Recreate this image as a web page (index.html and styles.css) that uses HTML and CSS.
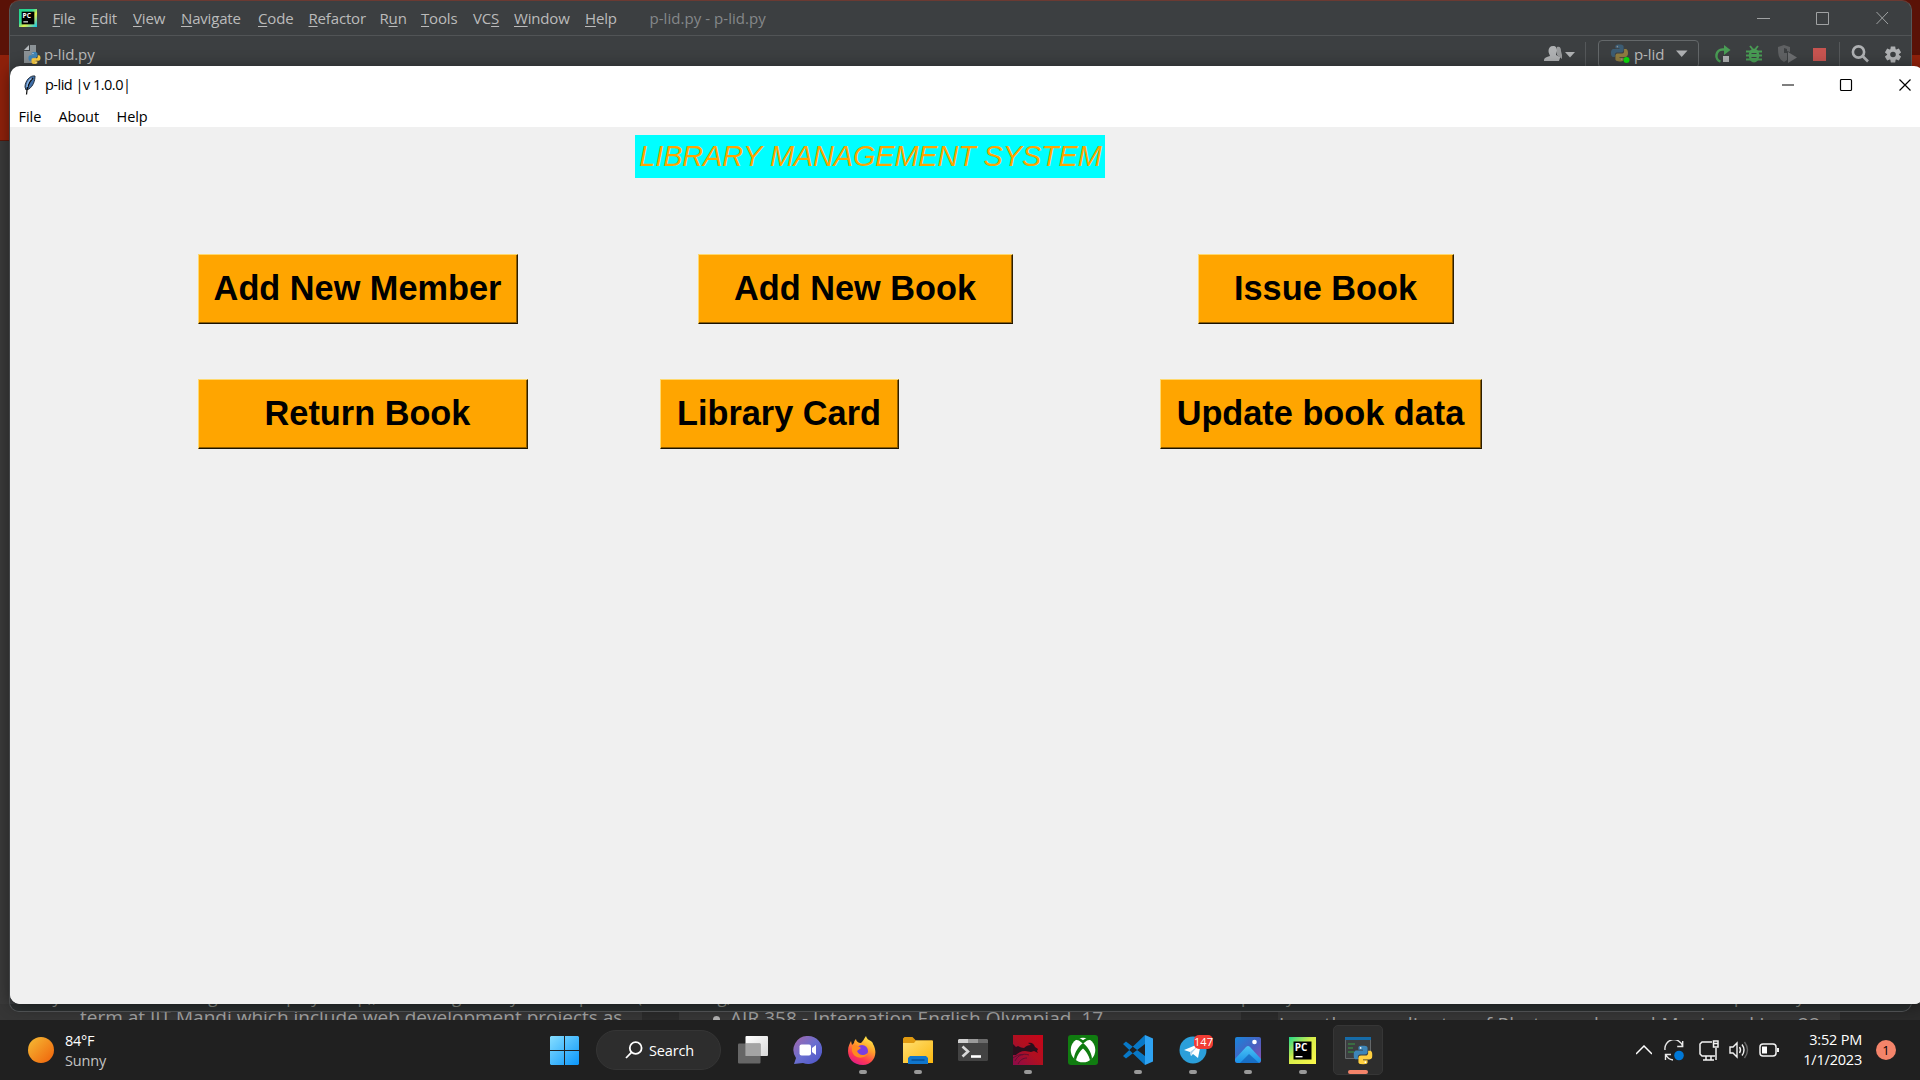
FILE: index.html
```html
<!DOCTYPE html>
<html lang="en">
<head>
<meta charset="utf-8">
<title>p-lid |v 1.0.0|</title>
<link rel="stylesheet" href="styles.css">
</head>
<body>
<svg width="0" height="0" class="defs">
  <defs>
    <linearGradient id="gWin" x1="0" y1="0" x2="1" y2="1"><stop offset="0" stop-color="#86deff"/><stop offset="1" stop-color="#0a96fa"/></linearGradient>
    <linearGradient id="gPc" x1="0" y1="0" x2="1" y2="1"><stop offset="0" stop-color="#21d789"/><stop offset=".45" stop-color="#d8ee4a"/><stop offset="1" stop-color="#fcf84a"/></linearGradient>
    <linearGradient id="gPcIde" x1="0" y1="0" x2="1" y2="1"><stop offset="0" stop-color="#21d789"/><stop offset=".4" stop-color="#2fd89a"/><stop offset=".6" stop-color="#e8f04a"/><stop offset="1" stop-color="#07c3f2"/></linearGradient>
    <linearGradient id="gChat" x1="0" y1="0" x2="1" y2="1"><stop offset="0" stop-color="#a566a8"/><stop offset=".5" stop-color="#6a6fd0"/><stop offset="1" stop-color="#4a52c8"/></linearGradient>
    <linearGradient id="gFox" x1=".8" y1="0" x2=".3" y2="1"><stop offset="0" stop-color="#fff44f"/><stop offset=".4" stop-color="#ffa02a"/><stop offset=".75" stop-color="#ff3a50"/><stop offset="1" stop-color="#e01a8c"/></linearGradient>
    <linearGradient id="gDir" x1="0" y1="0" x2="1" y2="1"><stop offset="0" stop-color="#ffdf72"/><stop offset="1" stop-color="#fcb80f"/></linearGradient>
    <linearGradient id="gKali" x1="0" y1="1" x2="1" y2="0"><stop offset="0" stop-color="#8a0a4a"/><stop offset=".5" stop-color="#b01020"/><stop offset="1" stop-color="#c80418"/></linearGradient>
    <linearGradient id="gPhoto" x1="0" y1="0" x2="1" y2="1"><stop offset="0" stop-color="#1886dc"/><stop offset=".55" stop-color="#4a5fc0"/><stop offset="1" stop-color="#9050b0"/></linearGradient>
    <linearGradient id="gHill" x1="0" y1="0" x2="0" y2="1"><stop offset="0" stop-color="#4cc4f4"/><stop offset="1" stop-color="#1a90e8"/></linearGradient>
    <linearGradient id="gTask" x1="0" y1="0" x2="1" y2="1"><stop offset="0" stop-color="#ffffff"/><stop offset="1" stop-color="#d8d8d8"/></linearGradient>
    <symbol id="python" viewBox="0 0 20 20">
      <path class="py-a" d="M9.8 0C5 0 5.200 2 5.200 2v2.500h4.800v.8H3.200S0 5 0 9.900s2.800 4.700 2.800 4.700h1.800v-2.400s-.1-2.800 2.800-2.800h4.700s2.700 0 2.700-2.600V2.600S15.200 0 9.800 0z"/>
      <path class="py-b" d="M10.200 20c4.800 0 4.600-2 4.600-2v-2.500H10v-.8h6.800s3.200.3 3.200-4.600-2.800-4.700-2.800-4.700h-1.800v2.400s.1 2.800-2.800 2.800H7.900s-2.700 0-2.700 2.600v4.200S4.800 20 10.200 20z"/>
      <circle cx="7.500" cy="2.500" r=".9" fill="#fff"/><circle cx="12.500" cy="17.500" r=".9" fill="#fff"/>
    </symbol>
  </defs>
</svg>

<main class="desktop">
  <section class="reader">
    <p class="pane pane-a">term at IIT Mandi which include web development projects as</p>
    <p class="pane pane-b"><span class="dot"></span>AIR 358 - Internation English Olympiad, 17</p>
    <p class="pane pane-c">I am the coordinator of Photography and Music making, 22</p>
  </section>

  <section class="ide">
    <header class="ide-title">
      <svg class="ide-logo" width="18" height="18" viewBox="0 0 27 27"><rect width="27" height="27" fill="url(#gPcIde)"/><rect x="4" y="4" width="19" height="19" fill="#000"/><text x="5.200" y="13.500" class="pc-text">PC</text><rect x="6.500" y="18.500" width="7" height="1.600" fill="#fff"/></svg>
      <nav class="ide-menu">
        <span><u>F</u>ile</span><span><u>E</u>dit</span><span><u>V</u>iew</span><span><u>N</u>avigate</span><span><u>C</u>ode</span><span><u>R</u>efactor</span><span>R<u>u</u>n</span><span><u>T</u>ools</span><span>VC<u>S</u></span><span><u>W</u>indow</span><span><u>H</u>elp</span>
      </nav>
      <span class="ide-name">p-lid.py - p-lid.py</span>
      <svg class="ide-controls" width="132" height="14" fill="none" stroke="#a0a2a3"><path d="M0 7.500h13M119.500 1l11.500 12M131 1l-11.500 12"/><path d="M59.500 1.500h12v12h-12z"/></svg>
    </header>
    <div class="ide-bar">
      <svg width="17" height="19" viewBox="0 0 17 19"><path fill="#8b9296" d="M6 0h6v18H0V6h6z"/><path fill="#b5babd" d="M5 0v5H0z"/><use href="#python" x="4" y="7" width="13" height="12"/></svg>
      <span class="ide-path">p-lid.py</span>
      <div class="tools">
        <svg width="32" height="16" viewBox="0 0 32 16" fill="#afb1b3"><path d="M10 0c3 0 4 2 4 4.500 0 2-1 3-1 4.500l4 2v1l-1 3H1c0-3 1-3.500 6-5 0-1-1.500-2.500-1.500-5C5.500 2 7 0 10 0z" transform="translate(-1)"/><path d="M13 1c3-1 4 1 4 4l1 4v4l-5-4z" opacity=".8"/><path d="M21 6h10l-5 5.500z"/></svg>
        <i class="sep"></i>
        <div class="combo"><svg width="20" height="20" viewBox="0 0 20 20"><use href="#python" x="1" width="17" height="18" opacity=".42"/><circle cx="16.500" cy="16" r="3" fill="#0be00b"/></svg><span>p-lid</span><svg width="12" height="8"><path fill="#afb1b3" d="M0 .5h11.500L5.700 7z"/></svg></div>
        <svg width="17" height="18" viewBox="0 0 17 18"><path d="M10 4.500H8.500a6.300 6.300 0 0 0-2 12.200" fill="none" stroke="#499c54" stroke-width="2.500"/><path fill="#499c54" d="M10 0l6.500 5-6.500 5z"/><path fill="#afb1b3" d="M9 11h6v6H9z"/></svg>
        <svg width="16" height="18" viewBox="0 0 16 18"><ellipse cx="8" cy="10.500" rx="5.200" ry="7" fill="#499c54"/><path d="M4 1l2.500 3M12 1L9.500 4M0 6.500h16M0 10.500h16M0 14.500h16" stroke="#499c54" stroke-width="1.900"/><path d="M5.500 8.500h5M5.500 12.500h5" stroke="#3c3f41" stroke-width="1.200"/></svg>
        <svg width="19" height="18" viewBox="0 0 19 18"><path fill="#5f6163" d="M0 2l6-2 6 2v5l-3-1v9l-3 2C1 14 0 11 0 2z"/><path fill="#3c3f41" d="M6 3l3 1v4H6z"/><path fill="#6c6e70" d="M10 7l9 5.500-9 5.500z"/></svg>
        <svg width="14" height="14"><path fill="#c75450" d="M1 1h13v13H1z"/></svg>
        <i class="sep"></i>
        <svg width="19" height="18" fill="none" stroke="#afb1b3" stroke-width="2.600"><circle cx="7.500" cy="7" r="5.600"/><path d="M11.500 11l5.500 5.500"/></svg>
        <svg width="16" height="17" viewBox="-8 -8.500 16 17"><g fill="#afb1b3"><path id="tooth" d="M-2.200-8h4.400l.6 4h-5.600z"/><use href="#tooth" transform="rotate(60)"/><use href="#tooth" transform="rotate(120)"/><use href="#tooth" transform="rotate(180)"/><use href="#tooth" transform="rotate(240)"/><use href="#tooth" transform="rotate(300)"/></g><circle r="4.300" fill="none" stroke="#afb1b3" stroke-width="3"/></svg>
      </div>
    </div>
    <footer class="ide-foot"><span>by</span><span>using</span><span>employ</span><span>up,,</span><span>g</span><span>y</span><span>p</span><span>(</span><span>ug,</span><span>p</span><span>y</span><span>p</span><span>y</span></footer>
  </section>

  <section class="app">
    <header class="app-title">
      <svg width="13" height="20" viewBox="0 0 13 20"><path d="M12 1C7 0 2 6 2 12l1 3 3-1c4-3 6-8 6-13z" fill="#3f6ea8" stroke="#26303c"/><path d="M10 3C7 6 4 10 3.500 19.500" stroke="#111" stroke-width="1.300" fill="none"/><path d="M8.500 3.500C5 6 4 9 4 12" stroke="#8fb8e8" stroke-width="1.500" fill="none"/></svg>
      <span class="app-name">p-lid |v 1.0.0|</span>
      <svg class="app-controls" width="130" height="14" fill="none" stroke="#000" stroke-width="1.200"><path d="M0 7h12M117.500 1.500l11 11M128.500 1.500l-11 11"/><rect x="58.500" y="1.500" width="11" height="11" rx="1"/></svg>
    </header>
    <nav class="app-menu"><span>File</span><span>About</span><span>Help</span></nav>
    <div class="app-body">
      <h1>LIBRARY MANAGEMENT SYSTEM</h1>
      <div class="row row-1"><button>Add New Member</button><button>Add New Book</button><button>Issue Book</button></div>
      <div class="row row-2"><button>Return Book</button><button>Library Card</button><button>Update book data</button></div>
    </div>
  </section>

  <footer class="taskbar">
    <div class="weather"><i class="sun"></i><div><b>84°F</b><span>Sunny</span></div></div>
    <div class="dock">
      <svg class="start" width="29" height="29" fill="url(#gWin)"><path d="M1 0h13v14H0V1zM15 0h13l1 1v13H15zM0 15h14v14H1l-1-1zM15 15h14v13l-1 1H15z"/></svg>
      <div class="search"><svg width="18" height="18" fill="none" stroke="#fff" stroke-width="1.800"><circle cx="10.700" cy="7" r="5.900"/><path d="M6.500 11.300L1 17"/></svg>Search</div>
      <div class="slot"><svg width="30" height="28"><rect x="7.500" width="22.500" height="20" rx="1" fill="url(#gTask)"/><rect y="7.500" width="22.500" height="20" rx="1" fill="#707070" opacity=".88"/><path d="M7.500 7.500h15v12.500h-15z" fill="#a4a4a4"/></svg></div>
      <div class="slot"><svg width="29" height="29"><path fill="url(#gChat)" d="M15 0a14 14 0 1 1-5 27L1 28l2-6A14 14 0 0 1 15 0z"/><rect x="6.500" y="8.500" width="11.500" height="11" rx="2" fill="#fff"/><path fill="#fff" d="M19 12l4-3v10l-4-3z"/></svg></div>
      <div class="slot run"><svg width="29" height="29"><path fill="url(#gFox)" d="M18 0c1 4 4 4 6 6 1 1 1 2 1 2 6 10 0 21-10 21C5 29 0 22 0 15c0-5 2-8 3-10l1 4 2-2c0-2 1-3 2-4 0 2 2 4 5 4 2-2 3-4 5-7z"/><circle cx="14" cy="15" r="6" fill="#7a3fe0"/><path fill="#ff8a20" d="M4 10c3-2 7 0 9 2l-4 3c2 5 7 5 11 2-2 6-14 7-16-2z"/></svg></div>
      <div class="slot run"><svg width="30" height="27"><path fill="#e09a10" d="M0 1.500L1.500 0h8L13 3.500h17V8H0z"/><path fill="url(#gDir)" d="M0 6h11l2-2.500h16l1 1V26H0z"/><path fill="#1076cc" d="M5 27v-6l2-2h16l2 2v6z"/><path d="M8.500 23h13" stroke="#054f96" stroke-width="1.500"/></svg></div>
      <div class="slot"><svg width="30" height="22"><rect width="30" height="22" rx="1.500" fill="#434343"/><path fill="#d0d0d0" d="M1 0h9v4H0V1z"/><path fill="#9a9a9a" d="M10 0h10v4H10z"/><path fill="#6c6c6c" d="M20 0h9l1 1v3H20z"/><path d="M4.500 7.500l5.500 5-5.500 5" stroke="#d8d8d8" stroke-width="2.600" fill="none"/><path d="M13 17.500h10" stroke="#fff" stroke-width="2.600"/></svg></div>
      <div class="slot run"><svg width="30" height="30"><rect width="30" height="30" fill="url(#gKali)"/><path fill="#28101c" d="M0 9l3 3 2-1c2 1 4 2 6 2 2-2 4-3 7-3l-3-2c4-1 6 1 7 4l3 2-1 2 1 2-4-2-3 1-6-1c-4 0-7 2-9 4L0 20z"/><path d="M2 26c3-6 8-8 14-6M5 29c2-4 5-6 9-6M0 23c4-3 8-4 10-3" stroke="#5e1030" fill="none"/></svg></div>
      <div class="slot"><svg width="30" height="30"><rect width="30" height="30" rx="3" fill="#107c10"/><circle cx="15" cy="15" r="12.300" fill="#fff"/><path d="M7 3.500C11 3 15 7 15 7s4-4 8-3.500" stroke="#107c10" stroke-width="2.500" fill="none"/><path fill="#107c10" d="M15 8c4 3 8.500 9 9 15.500l-2 2C21 20 17 15 15 13.500 13 15 9 20 8 25.500l-2-2C6.500 17 11 11 15 8z"/></svg></div>
      <div class="slot run"><svg width="30" height="30"><path fill="#0878c6" d="M0 9l3-2.500L22 21v9zM0 21l3 2.500L22 9V0z"/><path fill="#2ea2f2" d="M22 0l8 3.500v23L22 30z"/></svg></div>
      <div class="slot run badge-slot"><svg width="28" height="28"><circle cx="14" cy="14" r="13.500" fill="#2b9fda"/><path fill="#fff" d="M5 14l17-7-3 15-5-4-2 2-1-4z"/><path fill="#a9d0ea" d="M11 16l8-6-6 7-1 3z"/></svg><em>147</em></div>
      <div class="slot run"><svg width="26" height="26"><rect width="26" height="26" rx="2" fill="url(#gPhoto)"/><path fill="url(#gHill)" d="M0 22L11 10q2-2 4 0L26 22v2l-2 2H2l-2-2z"/><path fill="#1560b8" d="M5 26l9-9 10 9z" opacity=".7"/><circle cx="19.500" cy="5" r="2.300" fill="#fff"/></svg></div>
      <div class="slot run"><svg width="27" height="27"><rect width="27" height="27" fill="url(#gPc)"/><rect x="4.500" y="4.500" width="18" height="18" fill="#000"/><text x="5.700" y="13.500" class="pc-text">PC</text><rect x="6.500" y="19" width="7" height="1.400" fill="#fff"/></svg></div>
      <div class="slot active"><svg width="29" height="29"><path fill="#3c3e40" stroke="#65696b" d="M1.500 1.500h25v21h-25z"/><path fill="#156ba8" d="M1 1h26v3H1z"/><path d="M4 8h7M4 12h5M4 16h6" stroke="#3a7f43" stroke-width="1.300"/><use href="#python" x="9.500" y="9.500" width="19" height="19"/></svg></div>
    </div>
    <div class="tray">
      <svg width="16" height="10"><path d="M0 9l8-8 8 8" stroke="#fff" stroke-width="1.500" fill="none"/></svg>
      <svg width="21" height="21" fill="none" stroke="#e8e8e8" stroke-width="1.400"><path d="M1 10A9 9 0 0 1 18.500 6M18.700 1v5.500h-5.500M9 20a9 9 0 0 1-7-5M1.500 20v-5.500H7"/><circle cx="15" cy="15.500" r="4.800" fill="#0078d7" stroke="none"/></svg>
      <svg width="21" height="21" fill="none" stroke="#f2f2f2" stroke-width="1.500"><path d="M13 2H3L1 4v10l2 2h13M4 20h11M7 16v4M12 16v4M17 8v12"/><path d="M14.500 1h4.500v6h-4.500zM14.500 3.500H19"/></svg>
      <svg width="20" height="18" fill="none" stroke="#f2f2f2" stroke-width="1.400"><path d="M1 6h3l4-4v14l-4-4H1zM10.500 6q2 3 0 6M13 3.500q4 5.500 0 11"/><path d="M15.500 1q6 8 0 16" stroke="#666"/></svg>
      <svg width="21" height="14" fill="none" stroke="#f2f2f2" stroke-width="1.500"><rect x="1" y="1" width="16" height="12" rx="3"/><path d="M3 3.500h5v7H3z" fill="#fff" stroke="none"/><path d="M19 5v4" stroke-width="2"/></svg>
      <div class="clock"><span>3:52 PM</span><span>1/1/2023</span></div>
      <b class="alerts">1</b>
    </div>
  </footer>
</main>
</body>
</html>
```
FILE: styles.css
```css
* { box-sizing: border-box; }
body { margin: 0; background: #3a3a3a; font-family: "Open Sans", "Noto Sans", sans-serif; font-size: 15px; }
svg { display: block; flex: none; }
.defs { position: absolute; }

.desktop {
  position: relative; width: 1920px; height: 1080px; overflow: hidden;
  background: linear-gradient(#5a1207 0 55px, #8f210b 55px 140px, #5e1608 140px 141px, #3a3a3a 141px);
}

/* document viewer, visible only between the windows and the taskbar */
.reader {
  position: absolute; left: 0; top: 1004px; width: 1920px; height: 16px; overflow: hidden;
  display: grid; grid-template-columns: 642px 599px 1fr;
  background: linear-gradient(90deg, #363636 0 642px, #2b2b2b 642px 679px, #363636 679px 1241px, #2b2b2b 1241px 1278px, #363636 1278px 1840px, #2b2b2b 1840px);
  color: #a0a0a0; font-size: 19px; line-height: 26px; white-space: nowrap;
}
.pane { margin: 0; }
.pane-a { padding: 0 0 0 80px; }
.pane-b { padding: 1px 0 0 71px; display: flex; align-items: center; height: 27px; letter-spacing: .05px; }
.pane-c { padding: 7px 0 0 38px; letter-spacing: .38px; }
.dot { width: 7px; height: 7px; border-radius: 50%; background: #b0b0b0; margin: 3px 10px 0 0; }

/* IDE window */
.ide {
  position: absolute; left: 9px; top: 0; width: 1903px; height: 1012px; overflow: hidden;
  display: flex; flex-direction: column;
  background: #3c3f41; color: #bbb; border: 1px solid #55585a; border-top-color: #6b3a32; border-radius: 10px;
}
.ide-title { height: 35px; flex: none; display: flex; align-items: center; padding: 0 22px 0 9px; border-bottom: 1px solid #515456; }
.ide-menu { margin-left: 15.500px; display: grid; width: 597px; grid-template-columns: 38.500px 42px 48px 77px 50.500px 71px 41.500px 52px 41px 71px 1fr; letter-spacing: -.17px; }
.ide-menu u { text-underline-offset: 2px; text-decoration-thickness: 1px; }
.ide-name { color: #85888a; letter-spacing: .05px; }
.ide-controls { margin-left: auto; }
.ide-bar { height: 36px; flex: none; display: flex; align-items: center; padding-left: 14px; }
.ide-path { margin-left: 3px; letter-spacing: -.1px; }
.tools { margin-left: auto; display: grid; align-items: center; grid-template-columns: 41px 13px 116px 32px 32px 34px 27px 12px 34px 26px; }
.sep { width: 1px; height: 24px; background: #55585a; }
.combo { display: flex; align-items: center; width: 101px; height: 28px; padding-left: 11px; border: 1px solid #64686a; border-radius: 4px; letter-spacing: -.1px; }
.combo span { width: 42px; margin-left: 4px; }
.ide-foot {
  margin-top: auto; height: 7px; flex: none; padding-left: 32px; overflow: hidden; display: grid;
  grid-template-columns: 133px 86px 86px 105px 58px 69px 58px 70px 534px 45px 448px 62px 1fr;
  background: #2c3031; color: #8c9089; font-size: 17px; line-height: 26px; white-space: nowrap;
}
.ide-foot span { margin-top: -20px; }

.py-a { fill: #3d85b8; }
.py-b { fill: #ffd040; }
.pc-text { font: 700 10px "Open Sans", sans-serif; fill: #fff; }

/* library application window */
.app {
  position: absolute; left: 10px; top: 66px; width: 1914px; height: 938px; overflow: hidden;
  display: flex; flex-direction: column;
  background: #fff; border-radius: 10px; box-shadow: 0 2px 16px rgba(0, 0, 0, .45); color: #000;
}
.app-title { height: 37px; flex: none; display: flex; align-items: center; padding: 0 12px 0 13px; }
.app-name { margin-left: 9px; font-size: 14.500px; letter-spacing: -.5px; }
.app-controls { margin-left: auto; }
.app-menu { height: 24px; flex: none; padding: 3px 0 0 8.500px; display: grid; grid-template-columns: 40px 58px 60px; align-items: center; line-height: 21px; font-size: 14.500px; letter-spacing: -.05px; }
.app-body { flex: 1; padding-top: 8px; background: #f0f0f0; }
h1 {
  margin: 0 0 76px 625px; width: 470px; height: 43px; padding-left: 1px; background: #0ff; color: orange; text-align: center;
  font: italic 400 29px/43px "Liberation Sans", Arial, sans-serif; font-kerning: none; letter-spacing: -.2px; white-space: nowrap;
}
.row { display: grid; justify-content: start; height: 70px; }
.row + .row { margin-top: 55px; }
.row-1 { padding-left: 188px; grid-template-columns: 320px 315px 256px; column-gap: 180px; }
.row-1 button:nth-child(3) { margin-left: 5px; margin-right: -5px; }
.row-2 { padding-left: 188px; grid-template-columns: 330px 239px 322px; column-gap: 132px; }
.row-2 button:nth-child(1) { padding-left: 10px; }
.row-2 button:nth-child(3) { margin-left: 129px; margin-right: -129px; }
button {
  padding: 0 1px 2px 0; border: 1px solid; border-color: #ffd96e #2e1e00 #1a1100 #ffd96e; border-radius: 0; background: orange; color: #000;
  box-shadow: inset -1px -1px #8f5d00;
  font: 700 34.300px/66px "Liberation Sans", Arial, sans-serif; font-kerning: none; white-space: nowrap;
}

/* taskbar */
.taskbar { position: absolute; left: 0; top: 1020px; width: 1920px; height: 60px; display: flex; align-items: center; background: #202020; color: #fff; }
.weather { width: 550px; display: flex; align-items: center; padding-left: 28px; gap: 11px; font-size: 14.500px; line-height: 20px; letter-spacing: -.3px; }
.weather b, .weather span { display: block; font-weight: 400; }
.weather span { color: #c4c4c4; letter-spacing: -.15px; }
.weather div { padding-top: 1px; }
.sun { width: 26px; height: 26px; border-radius: 50%; background: linear-gradient(135deg, #f5bd35, #f0600a); }
.dock { display: flex; align-items: center; height: 60px; }
.search { margin: 0 4px 0 17px; width: 125px; height: 40px; display: flex; align-items: center; gap: 6px; padding-left: 28px; border: 1px solid #353535; border-radius: 20px; background: #2d2d2d; font-size: 14.500px; letter-spacing: -.15px; }
.slot { position: relative; width: 55px; height: 50px; display: flex; align-items: center; justify-content: center; }
.slot.run::after, .slot.active::after { content: ""; position: absolute; bottom: 1px; width: 8px; height: 4px; border-radius: 2px; background: #999; }
.slot.active { width: 50px; margin-left: 3px; background: #2d2d2d; border: 1px solid #363636; border-radius: 5px; }
.slot.active::after { width: 20px; bottom: 0; background: #f4846a; }
.slot em { position: absolute; left: 29px; top: 10px; width: 19px; height: 14px; border-radius: 5px; background: #f23c34; font: 400 11px/14px "Open Sans", sans-serif; text-align: center; }
.tray { margin-left: auto; width: 284px; display: grid; align-items: center; grid-template-columns: 28px 35px 30px 30px 22px 81px 1fr; }
.clock { text-align: right; font-size: 14.500px; line-height: 20px; letter-spacing: -.2px; }
.clock span { display: block; }
.alerts { margin-left: 14px; width: 20px; height: 20px; border-radius: 50%; background: #f4846a; color: #000; font-size: 13px; font-weight: 400; line-height: 20px; text-align: center; }
```
